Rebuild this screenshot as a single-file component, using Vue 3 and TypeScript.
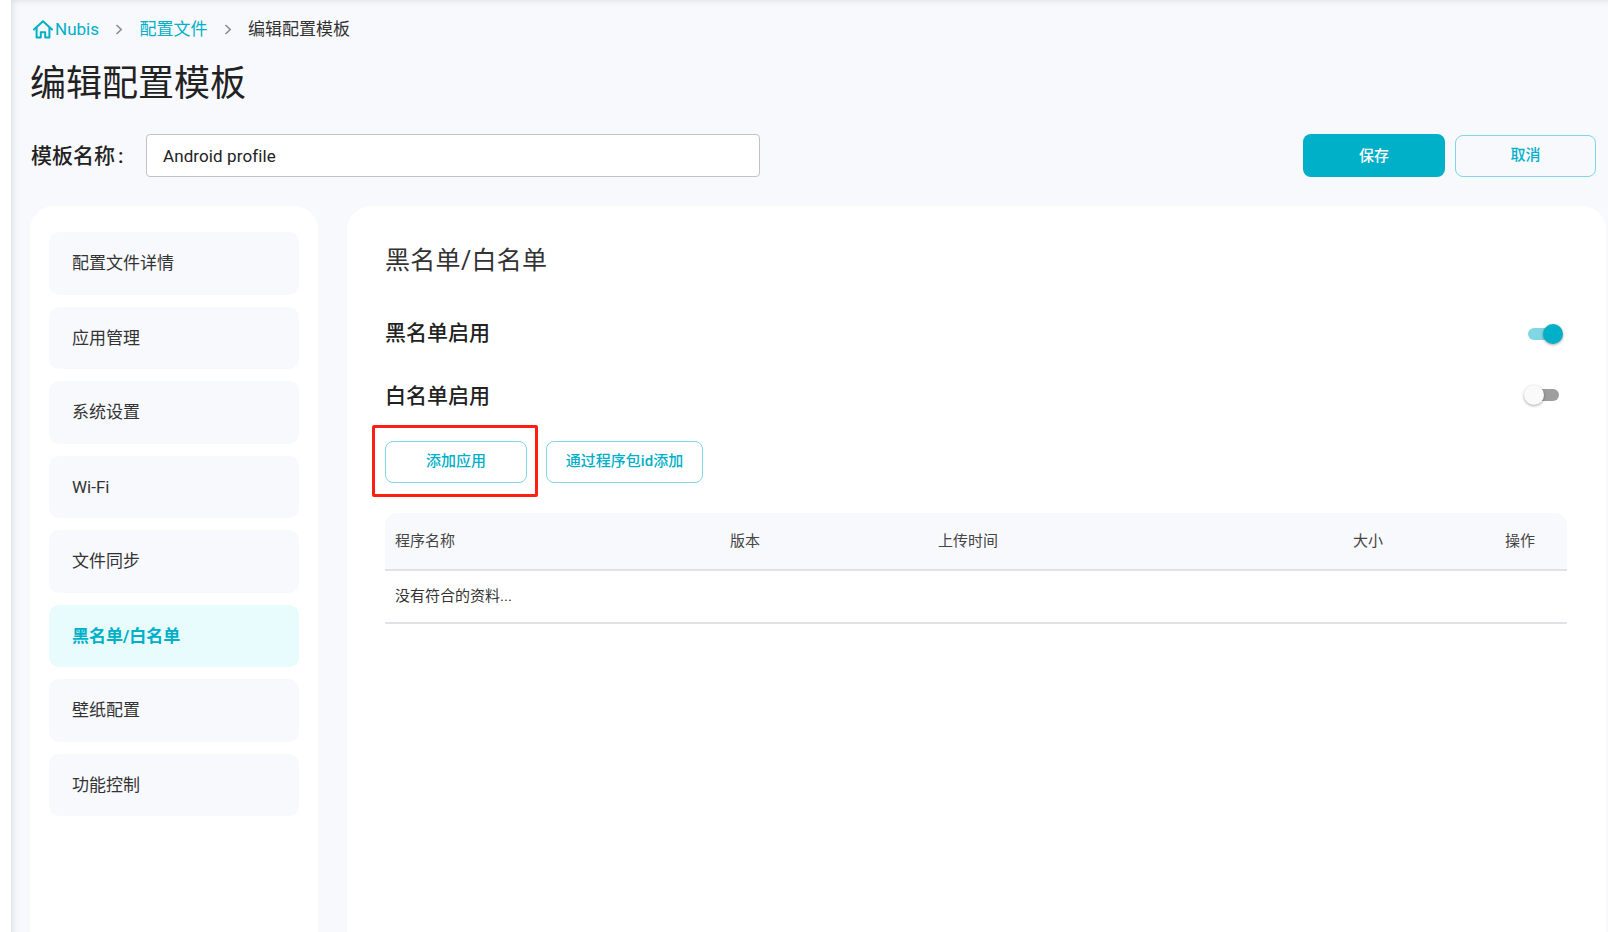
<script setup lang="ts">
const menu: string[] = ['配置文件详情', '应用管理', '系统设置', 'Wi-Fi', '文件同步', '黑名单/白名单', '壁纸配置', '功能控制']
const activeItem = '黑名单/白名单'
</script>

<template>
  <div class="shell">
    <main class="page">
      <nav class="crumbs">
        <a class="crumb link home">
          <svg width="20" height="19" viewBox="0 0 20 19" fill="none" stroke="#00afc8" stroke-width="2" stroke-linejoin="round" stroke-linecap="round">
            <path d="M1 9.5 10 1.2l9 8.3" />
            <path d="M3.6 8v9.6h4.2v-5.4h4.4v5.4h4.2V8" />
          </svg>
          <span>Nubis</span>
        </a>
        <span class="sep">
          <svg width="8" height="11" viewBox="0 0 8 11" fill="none" stroke="#8f8f99" stroke-width="1.7"><path d="M1.5 1 6.2 5.5 1.5 10" /></svg>
        </span>
        <a class="crumb link">配置文件</a>
        <span class="sep">
          <svg width="8" height="11" viewBox="0 0 8 11" fill="none" stroke="#8f8f99" stroke-width="1.7"><path d="M1.5 1 6.2 5.5 1.5 10" /></svg>
        </span>
        <span class="crumb">编辑配置模板</span>
      </nav>
      <h1 class="title">编辑配置模板</h1>
      <div class="name-row">
        <label class="name-label">模板名称<span class="colon">:</span></label>
        <div class="name-input">Android profile</div>
        <div class="spacer"></div>
        <button class="btn primary">保存</button>
        <button class="btn outline cancel">取消</button>
      </div>
      <div class="columns">
        <aside class="side card">
          <div v-for="item in menu" :key="item" class="side-item" :class="{ active: item === activeItem }">{{ item }}</div>
        </aside>
        <section class="content card">
          <h2 class="section-title">黑名单/白名单</h2>
          <div class="switch-row first">
            <span class="switch-label">黑名单启用</span>
            <span class="toggle on"><i></i></span>
          </div>
          <div class="switch-row second">
            <span class="switch-label">白名单启用</span>
            <span class="toggle off"><i></i></span>
          </div>
          <div class="actions">
            <div class="highlight-wrap">
              <button class="btn outline add">添加应用</button>
              <span class="highlight"></span>
            </div>
            <button class="btn outline pkg">通过程序包id添加</button>
          </div>
          <div class="table">
            <div class="thead">
              <span>程序名称</span><span>版本</span><span>上传时间</span><span>大小</span><span>操作</span>
            </div>
            <div class="empty">没有符合的资料...</div>
          </div>
        </section>
      </div>
    </main>
  </div>
</template>

<style>
html, body { margin: 0; background: #fff; overflow: hidden; }
</style>

<style scoped>
.shell {
  height: 932px;
  overflow: hidden;
  padding-left: 11px;
  background: #fff;
  font-family: Roboto, "Noto Sans CJK SC", sans-serif;
  color: #333;
  box-sizing: border-box;
}
.page {
  height: 932px;
  background: #f8f9fd;
  box-shadow: inset 6px 5px 7px -5px rgba(60, 60, 90, 0.16);
  padding: 18px 2px 0 19px;
  box-sizing: border-box;
  overflow: hidden;
}
.crumbs { display: flex; align-items: center; height: 22px; font-size: 17px; line-height: 22px; padding-left: 3px; }
.crumb { white-space: nowrap; color: #333; }
.link { color: #00afc8; }
.home { display: flex; align-items: center; gap: 2px; }
.sep { display: flex; align-items: center; justify-content: center; width: 40.5px; height: 22px; }
.title { margin: 19px 0 0; font-size: 36px; line-height: 50px; font-weight: 400; color: #222; }
.name-row { display: flex; align-items: center; height: 43px; margin-top: 25px; }
.name-label { width: 115px; margin: 0 0 4px 1px; font-size: 21px; font-weight: 500; color: #222; white-space: nowrap; }
.colon { margin-left: 3px; }
.name-input {
  width: 614px; height: 43px; box-sizing: border-box; border: 1px solid #c2c2c2; border-radius: 4px;
  background: #fff; padding-left: 16px; font-size: 17px; letter-spacing: 0.1px; line-height: 43px; color: #222;
}
.spacer { flex: 1; }
.btn { font-family: inherit; font-size: 15px; font-weight: 500; border-radius: 8px; box-sizing: border-box; cursor: pointer; padding: 0 0 3px; }
.primary { width: 142px; height: 43px; border: 0; background: #00afc8; color: #fff; }
.outline { background: transparent; border: 1px solid #7fd7e3; color: #00afc8; padding-bottom: 5px; }
.cancel { width: 141px; height: 42px; margin-left: 10px; margin-right: 10px; }
.columns { display: flex; gap: 29px; margin-top: 29px; }
.card { background: #fff; border-radius: 24px; height: 760px; box-sizing: border-box; }
.side { width: 288px; padding: 26px 19px; flex: none; }
.side-item {
  height: 62.5px; line-height: 62px; margin-bottom: 12px; padding-left: 23px; border-radius: 10px;
  background: #f8f9fd; font-size: 17px; color: #333;
}
.side-item.active { background: #e8fcfd; color: #00afc8; font-weight: 700; }
.content { flex: 1; padding: 35px 39px 33px 38px; }
.section-title { margin: 0; font-size: 25px; letter-spacing: 0.3px; line-height: 40px; font-weight: 400; color: #333; }
.switch-row { display: flex; align-items: center; justify-content: space-between; height: 40px; margin-top: 21px; }
.switch-row.first { margin-top: 33px; }
.first .switch-label { margin-bottom: 6px; }
.second .switch-label { margin-bottom: 2px; }
.switch-label { font-size: 21px; font-weight: 500; color: #222; }
.toggle { display: block; position: relative; width: 32px; height: 12px; border-radius: 6px; margin-right: 7px; }
.toggle i { position: absolute; top: -4px; width: 20px; height: 20px; border-radius: 50%; box-shadow: 0 1px 3px rgba(0, 0, 0, 0.35); }
.toggle.on { background: #80d7e3; }
.toggle.on i { left: 15px; background: #00afc8; }
.toggle.off { background: #9e9e9e; margin-right: 8px; }
.toggle.off i { left: -3px; background: #fafafa; }
.actions { display: flex; gap: 19px; margin-top: 26px; }
.highlight-wrap { position: relative; }
.add { display: block; width: 142px; height: 42px; }
.pkg { width: 157px; height: 42px; }
.highlight { position: absolute; left: -13px; top: -16px; width: 166px; height: 72px; box-sizing: border-box; border: 3px solid #ff1f12; border-radius: 2px; }
.table { margin-top: 30px; font-size: 15px; color: #333; }
.thead {
  display: grid; grid-template-columns: 335px 208px 415px 152px 1fr; align-items: center;
  height: 58px; padding: 0 0 4px 10px; background: #f8f9fd; border-radius: 12px 12px 0 0;
  border-bottom: 2px solid #e2e2e6; box-sizing: border-box; color: #444;
}
.empty { height: 53px; line-height: 50px; padding-left: 10px; border-bottom: 2px solid #e2e2e6; box-sizing: border-box; }
</style>
